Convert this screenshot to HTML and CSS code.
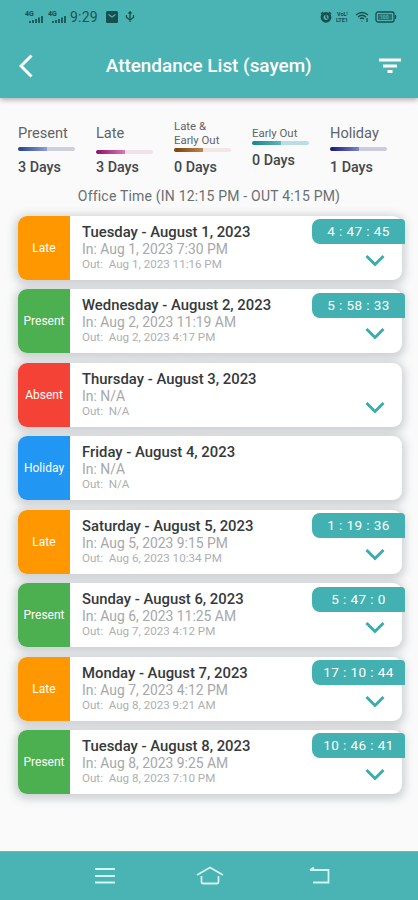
FILE: index.html
```html
<!DOCTYPE html>
<html lang="en">
<head>
<meta charset="utf-8">
<title>Attendance List</title>
<link rel="stylesheet" href="styles.css">
</head>
<body>
<header class="header">
  <div class="status">
    <svg class="signal" viewBox="0 0 18 14"><text x="0" y="6">4G</text><path d="M5 13v-2M8 13v-3M11 13V9M14 13V7.500M17 13V6"/></svg>
    <svg class="signal" viewBox="0 0 18 14"><text x="0" y="6">4G</text><path d="M5 13v-2M8 13v-3M11 13V9M14 13V7.500M17 13V6"/></svg>
    <span class="clock">9:29</span>
    <svg class="mail" viewBox="0 0 12 12"><rect width="12" height="12" rx="1.500"/><path d="M2.500 3.500 6 6l3.500-2.500"/></svg>
    <svg class="usb" viewBox="0 0 10 12"><path d="M5 11V1M3.500 2.500 5 .8l1.500 1.700M1.500 4v2.500L5 9l3.500-2.500V4"/></svg>
    <svg class="alarm" viewBox="0 0 12 12"><circle cx="6" cy="6.300" r="4"/><path d="M6 4v2.500l1.500 1M1 3l2-2M11 3 9 1"/></svg>
    <svg class="volte" viewBox="0 0 14 12"><text x="1" y="5">VoLᵗ</text><text x="0" y="11">LTE1</text></svg>
    <svg class="wifi" viewBox="0 0 15 12"><path d="M1 4q6-5 12 0M3 6q4-3.500 8 0M5 8q2-2 4 0M7 10v.5M12 7v4"/></svg>
    <svg class="battery" viewBox="0 0 22 12"><rect x="1" y="1" width="18" height="10" rx="2"/><path class="cap" d="M20.500 4v4"/><rect class="fill" x="3" y="3" width="14" height="6"/><text x="5" y="8">100</text></svg>
  </div>
  <div class="bar">
    <svg class="back" viewBox="0 0 14 24"><path d="M12.500 1.500 2 12l10.500 10.500"/></svg>
    <h1 class="title">Attendance List (sayem)</h1>
    <svg class="filter" viewBox="0 0 22 16"><path d="M0 2h22M4 8h14M8.500 13.500h5"/></svg>
  </div>
</header>
<main class="main">
  <section class="stats">
    <div class="stat"><div class="label">Present</div><div class="meter navy"></div><div class="days">3 Days</div></div>
    <div class="stat late"><div class="label">Late</div><div class="meter pink"></div><div class="days">3 Days</div></div>
    <div class="stat both"><div class="label small">Late &amp;<br>Early Out</div><div class="meter brown"></div><div class="days">0 Days</div></div>
    <div class="stat early"><div class="label small">Early Out</div><div class="meter teal"></div><div class="days">0 Days</div></div>
    <div class="stat"><div class="label">Holiday</div><div class="meter indigo"></div><div class="days">1 Days</div></div>
  </section>
  <p class="office">Office Time (IN 12:15 PM - OUT 4:15 PM)</p>
  <section class="list" id="list"></section>
</main>
<nav class="nav">
  <svg viewBox="0 0 28 20"><path d="M4 3h20M4 10h20M4 16.500h20"/></svg>
  <svg viewBox="0 0 28 20"><path d="M1 9 14 1.500 27 9M5.500 10v6q0 1.500 1.500 1.500h14q1.500 0 1.500-1.500v-6"/></svg>
  <svg viewBox="0 0 28 20"><path d="M4 4h18.500v12.500H7M8 1.500 4 4"/></svg>
</nav>
<script src="script.js"></script>
</body>
</html>
```
FILE: styles.css
```css
* { box-sizing: border-box; }
body { margin: 0; height: 900px; display: flex; flex-direction: column; overflow: hidden; background: #fafafa; font-family: Roboto, sans-serif; }
svg { display: block; fill: none; flex: none; }
.header { height: 98px; flex: none; background: #4ab3b3; box-shadow: 0 2px 5px rgba(0,0,0,.3); }
.status { height: 34px; padding: 0 21px 0 25px; display: flex; align-items: center; color: #1c5558; }
.status svg { stroke: #174e50; stroke-width: 1.3; }
.status text { fill: #174e50; stroke: none; font-size: 7px; font-weight: 700; }
.status .signal { width: 18px; height: 14px; margin-right: 5px; stroke-width: 1.700; }
.clock { width: 28px; margin-left: -1px; font-size: 14px; letter-spacing: .2px; }
.mail { width: 12px; height: 12px; margin-left: 8px; }
.status .mail rect { fill: #174e50; stroke: none; }
.status .mail path { stroke: #4ab3b3; }
.usb { width: 10px; height: 12px; margin-left: 7px; }
.alarm { width: 12px; height: 12px; margin-left: auto; }
.status .alarm circle { stroke-width: 2.800; }
.volte { width: 14px; height: 12px; margin-left: 4px; }
.status .volte text { font-size: 5.500px; }
.wifi { width: 15px; height: 12px; margin-left: 5px; }
.battery { width: 22px; height: 12px; margin-left: 5px; }
.status .battery .fill { fill: #174e50; stroke: none; opacity: .65; }
.status .battery text { fill: #4ab3b3; font-size: 5px; }
.bar { height: 64px; padding: 0 16.500px 0 19px; display: flex; align-items: center; justify-content: space-between; }
.back { width: 14px; height: 24px; stroke: #fff; stroke-width: 3; }
.title { margin: 0 0 0 5px; color: #fff; font-size: 18.900px; font-weight: 500; line-height: 24px; white-space: nowrap; }
.filter { width: 22px; height: 16px; stroke: #fff; stroke-width: 2.900; }
.main { flex: 1; min-height: 0; }
.stats { height: 89px; padding: 27px 0 0 18px; display: grid; grid-template-columns: repeat(5, 78px); }
.stat { color: #5f6468; }
.label { height: 17px; line-height: 17px; font-size: 14.600px; white-space: nowrap; }
.label.small { font-size: 11.400px; }
.meter { width: 57px; height: 4px; margin: 5px 0 8px; border-radius: 2px; }
.days { font-size: 14.300px; line-height: 16px; font-weight: 500; color: #42474b; }
.late .meter { margin: 8px 0 5px; }
.both { margin-top: -6px; }
.both .label { height: 27px; line-height: 14px; }
.both .meter { margin: 2px 0 7px; }
.early .meter { margin: -1px 0 7px; }
.navy { background: linear-gradient(90deg, #23408f, #8e9dd0 50%, #cdcfdd 51%); }
.pink { background: linear-gradient(90deg, #8c1065, #d678b4 50%, #f3e0eb 51%); }
.brown { background: linear-gradient(90deg, #7a3f0c, #b8884e 50%, #f3e6e6 51%); }
.teal { background: linear-gradient(90deg, #138590, #5fb3bd 50%, #b7dfe4 51%); }
.indigo { background: linear-gradient(90deg, #15157c, #7d85c0 50%, #cbcbdd 51%); }
.office { margin: 0; height: 18px; line-height: 18px; font-size: 14px; text-align: center; color: #6a6f72; letter-spacing: .2px; }
.list { padding: 10.900px 16.500px 0 18px; display: grid; gap: 9.450px; }
.card { position: relative; height: 64px; display: flex; border-radius: 9px; background: #fff; box-shadow: 0 2px 9px 3px rgba(70,85,95,.25); }
.tag { width: 52px; border-radius: 9px 0 0 9px; display: flex; align-items: center; justify-content: center; color: #fff; font-size: 12px; }
.orange { background: #ff9800; }
.green { background: #4caf50; }
.red { background: #f44336; }
.blue { background: #2196f3; }
.info { padding: 7px 0 0 12px; white-space: nowrap; }
.date { font-size: 14.850px; line-height: 18px; font-weight: 500; color: #35393c; }
.in { font-size: 13.900px; line-height: 16px; color: #a6a8aa; }
.out { font-size: 11.600px; line-height: 14px; color: #adafb1; white-space: pre; }
.time { position: absolute; top: 3.500px; right: -3.500px; width: 93px; height: 25px; border-radius: 8px 4px 0 8px; background: #43b1b1; color: #fff; font-size: 13.500px; line-height: 25px; text-align: center; letter-spacing: .4px; }
.chevron { width: 20px; height: 13px; margin: 38px 16.500px 0 auto; stroke: #3aacaa; stroke-width: 2.900; }
.nav { height: 49px; flex: none; background: #4ab3b3; display: flex; align-items: center; gap: 77px; border-top: 1px solid #63bdbd; padding-left: 91px; }
.nav svg { width: 28px; height: 20px; stroke: #d3f6f6; stroke-width: 1.800; }
.nav svg:last-child { margin-left: 5px; }
```
FILE: script.js
```js
const days = [
  ["Late", "orange", "Tuesday - August 1, 2023", "Aug 1, 2023 7:30 PM", "Aug 1, 2023 11:16 PM", "4 : 47 : 45"],
  ["Present", "green", "Wednesday - August 2, 2023", "Aug 2, 2023 11:19 AM", "Aug 2, 2023 4:17 PM", "5 : 58 : 33"],
  ["Absent", "red", "Thursday - August 3, 2023", "N/A", "N/A", "", true],
  ["Holiday", "blue", "Friday - August 4, 2023", "N/A", "N/A", "", false],
  ["Late", "orange", "Saturday - August 5, 2023", "Aug 5, 2023 9:15 PM", "Aug 6, 2023 10:34 PM", "1 : 19 : 36"],
  ["Present", "green", "Sunday - August 6, 2023", "Aug 6, 2023 11:25 AM", "Aug 7, 2023 4:12 PM", "5 : 47 : 0"],
  ["Late", "orange", "Monday - August 7, 2023", "Aug 7, 2023 4:12 PM", "Aug 8, 2023 9:21 AM", "17 : 10 : 44"],
  ["Present", "green", "Tuesday - August 8, 2023", "Aug 8, 2023 9:25 AM", "Aug 8, 2023 7:10 PM", "10 : 46 : 41"]
];
const chevron = '<svg class="chevron" viewBox="0 0 20 13"><path d="M1.500 2 10 10.500 18.500 2"/></svg>';
document.getElementById("list").innerHTML = days.map(([tag, color, date, cin, cout, time, open]) => `
  <article class="card">
    <div class="tag ${color}">${tag}</div>
    <div class="info">
      <div class="date">${date}</div>
      <div class="in">In: ${cin}</div>
      <div class="out">Out:  ${cout}</div>
    </div>
    ${time || open ? chevron : ""}
    ${time ? `<div class="time">${time}</div>` : ""}
  </article>`).join("");
```
